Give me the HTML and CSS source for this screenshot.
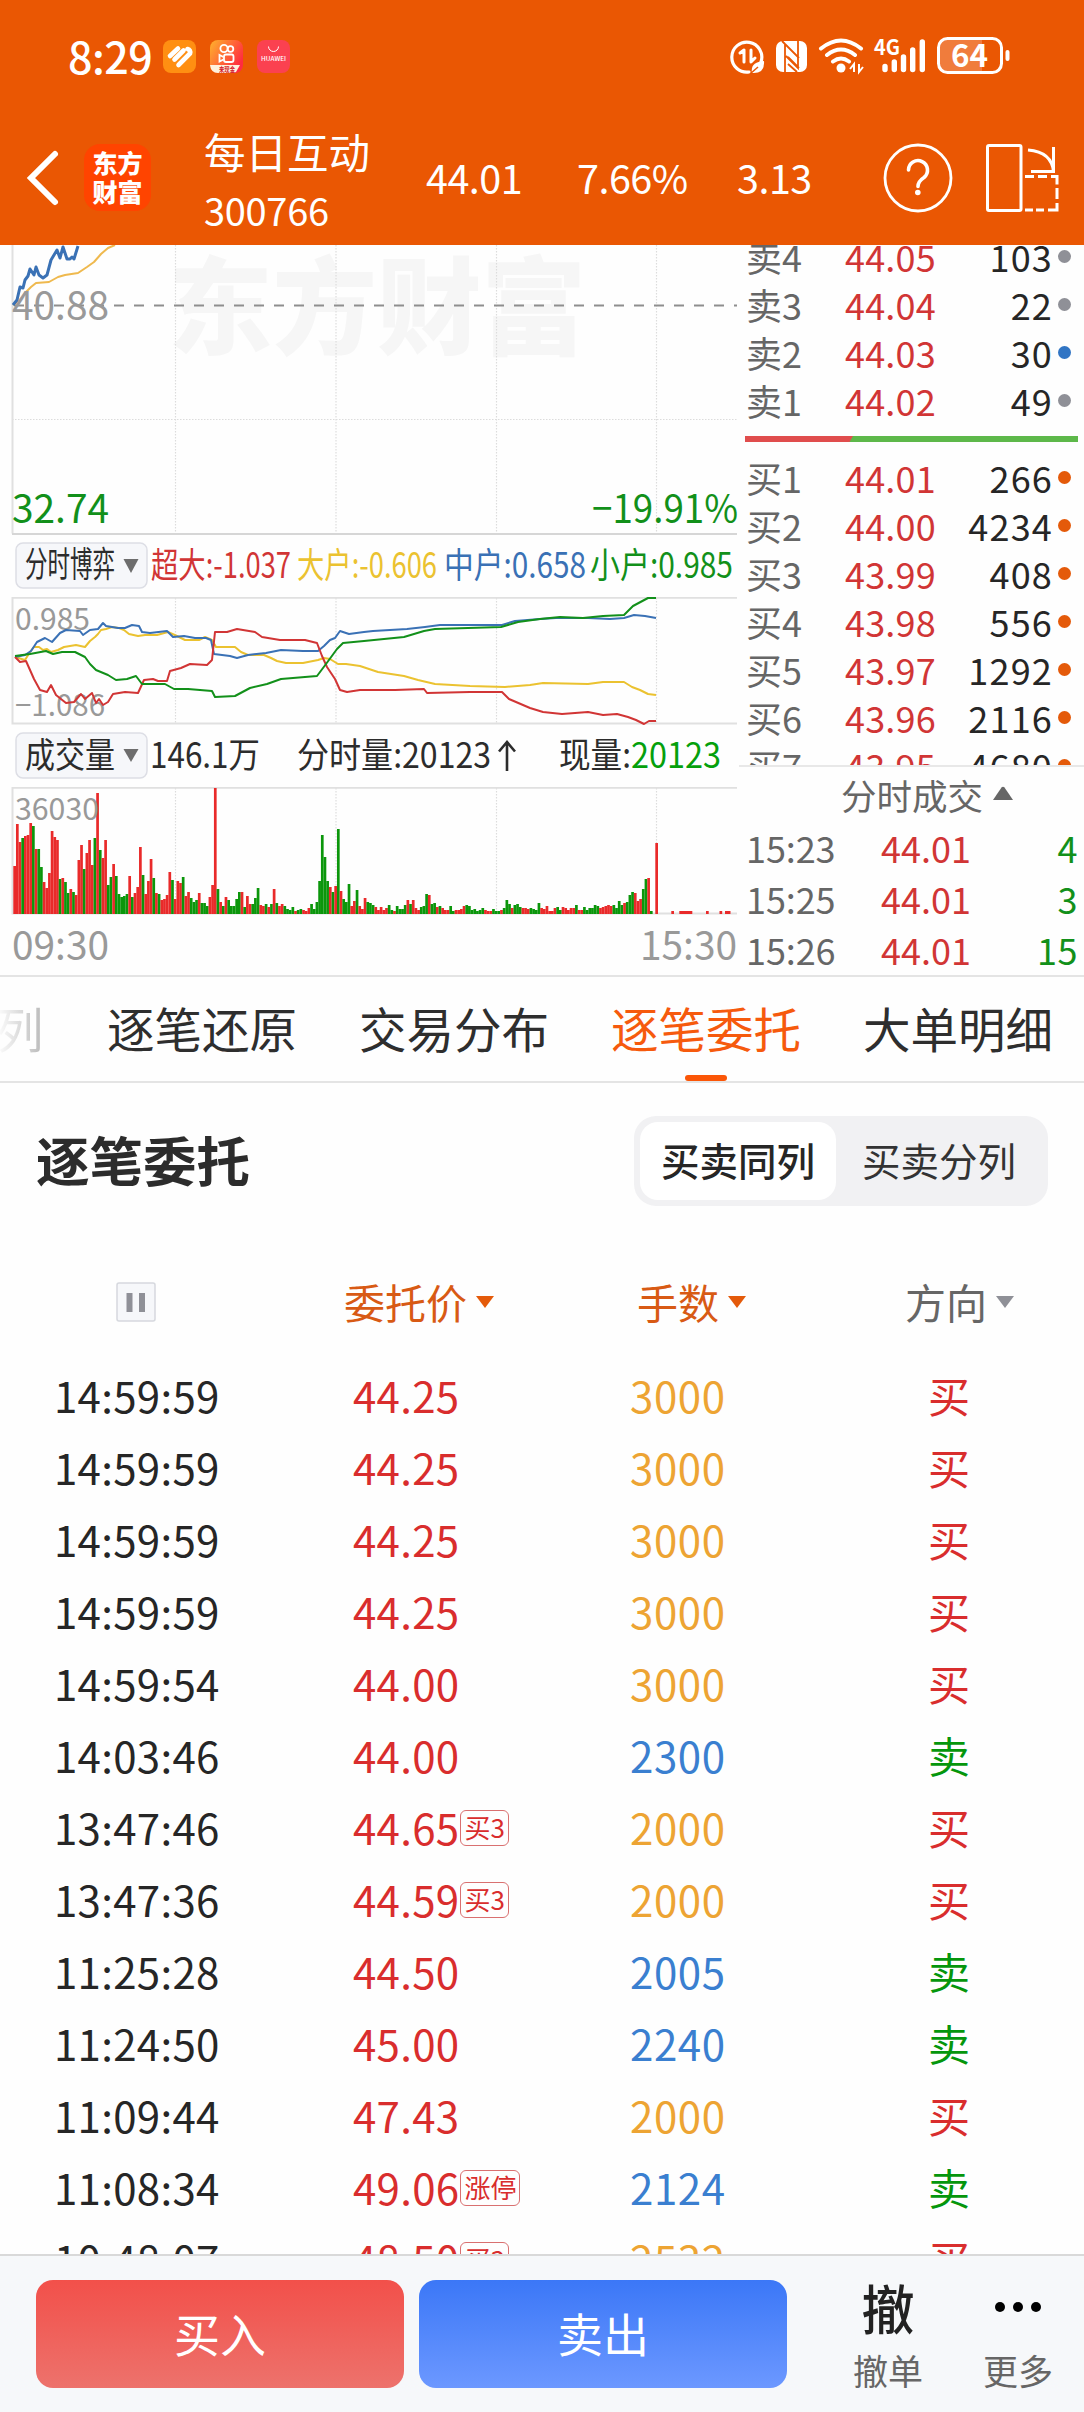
FILE: index.html
```html
<!DOCTYPE html>
<html lang="zh-CN">
<head>
<meta charset="utf-8">
<title>每日互动 300766</title>
<link rel="stylesheet" href="styles.css">
</head>
<body>
<div class="page">
  <header class="top">
    <div class="status">
      <span class="clock">8:29</span>
      <svg class="app" viewBox="0 0 33 33"><rect width="33" height="33" rx="8" fill="#ff8f12"/><path d="M7 16l8-7.500M11.500 19.500l9-9M15.500 25l11.500-11.500q1-3.500-2.500-4.500" stroke="#fff" stroke-width="4.600" stroke-linecap="round" fill="none"/></svg>
      <svg class="app" viewBox="0 0 33 33"><defs><linearGradient id="ks" x1="0" y1="0" x2="1" y2="0.600"><stop offset="0" stop-color="#ffb32c"/><stop offset="1" stop-color="#ff2b40"/></linearGradient></defs><rect width="33" height="33" rx="8" fill="url(#ks)"/><g fill="none" stroke="#fff" stroke-width="1.800"><circle cx="14" cy="8.500" r="3.600"/><circle cx="20.500" cy="9" r="2.800"/><rect x="14" y="14.500" width="9.500" height="7.500" rx="2"/><path d="M13.500 17l-4-2v6.500l4-2"/></g><path d="M0 25h30l-4 7q-2 1-4 1H8q-7 0-8-8z" fill="#fff1dc"/><text x="9" y="31.500" font-size="7" font-weight="700" fill="#d3202a" textLength="16" lengthAdjust="spacingAndGlyphs">来现金</text></svg>
      <svg class="app" viewBox="0 0 33 33"><rect width="33" height="33" rx="8" fill="#fb4150"/><path d="M11.500 6.500a5 5 0 0 0 10 0" fill="none" stroke="#fff" stroke-width="1"/><text x="4" y="21" font-size="6" font-weight="500" fill="#fff" textLength="25" lengthAdjust="spacingAndGlyphs">HUAWEI</text></svg>
      <svg class="sys" viewBox="728 34 286 44">
        <g fill="none" stroke="#fff" stroke-width="3.200" stroke-linecap="round" stroke-linejoin="round">
          <path d="M761 62a15 15 0 1 0-12 10"/>
          <path d="M740 53l4-3v12M751 50v12l4-4" stroke-width="3"/>
        </g>
        <path d="M764 61q1 13-12 12q-2-11 12-12z" fill="#fff"/><path d="M750 74l8-7" stroke="#ea5703" stroke-width="1.500"/>
        <rect x="776" y="41" width="31" height="31" rx="7" fill="#fff"/>
        <path d="M783.500 41v31M800 41v12l-16-12M783.500 48l16 17v7M799.500 72l-16-15" fill="none" stroke="#ea5703" stroke-width="0"/>
        <g fill="none" stroke="#ea5703" stroke-width="1.800"><path d="M785 72V44l14 14M798 41v27l-12-12M788 57l11 11M788 64l9 8M785 44l-3-3"/></g>
        <g fill="none" stroke="#fff" stroke-width="4" stroke-linecap="round"><path d="M821 48.500q20-16 40 0M827 55q14-11 28 0M833 61.500q8-6 16 0"/></g>
        <circle cx="841" cy="68" r="4.500" fill="#fff"/><path d="M850 69l4-5v8M863 67l-4 5v-8" stroke="#fff" stroke-width="2" fill="none"/>
        <text x="874" y="55" font-size="21" font-weight="700" fill="#fff" textLength="26" lengthAdjust="spacingAndGlyphs">4G</text>
        <g stroke="#fff" stroke-width="5.400" stroke-linecap="round"><path d="M885 66.500v3M894.300 62v7.500M903.500 57v12.500M912.700 50v19.500M922.300 42v27.500"/></g>
        <path d="M946 39h36v32h-36q-6 0-6-6V45q0-6 6-6z" fill="#f07c3c"/>
        <rect x="938.500" y="38.500" width="63" height="34" rx="9" fill="none" stroke="#fff" stroke-width="3"/>
        <path d="M1007.500 52v7" stroke="#fff" stroke-width="4" stroke-linecap="round"/>
        <text x="951" y="67" font-size="31" font-weight="700" fill="#fff" textLength="37" lengthAdjust="spacingAndGlyphs">64</text>
      </svg>
    </div>
    <div class="nav">
      <svg class="back" viewBox="0 0 34 58"><path d="M29 5L5 29L29 53" fill="none" stroke="#fff" stroke-width="6" stroke-linecap="round" stroke-linejoin="miter"/></svg>
      <div class="logo"><span>东方</span><span>财富</span></div>
      <div class="stock"><span class="name">每日互动</span><span class="code">300766</span></div>
      <span class="fig fig-price">44.01</span>
      <span class="fig fig-pct">7.66%</span>
      <span class="fig fig-chg">3.13</span>
      <svg class="help" viewBox="0 0 70 70"><circle cx="35" cy="35" r="33" fill="none" stroke="#fff" stroke-width="2.800"/><path d="M25.500 27a9.500 9.500 0 1 1 15.500 7.500q-6 4-6 9" fill="none" stroke="#fff" stroke-width="3.600" stroke-linecap="round"/><circle cx="34.800" cy="49.500" r="2.800" fill="#fff"/></svg>
      <svg class="rotate" viewBox="0 0 73 68"><g fill="none" stroke="#fff" stroke-width="3"><rect x="1.500" y="1.500" width="33.500" height="65" rx="1.500"/><path d="M42 6q24 2 25.500 22M67.500 3v24.500H45"/><path d="M39 32.500h9M52 32.500h9M65 32.500h6v8M71 44v11M71 59v7h-9M58 66h-8M47 66h-8"/></g></svg>
    </div>
  </header>

  <main class="quote">
    <div class="charts">
      <svg class="chart-price" viewBox="0 245 739 291">
        <text x="168" y="346" font-size="106" font-weight="900" fill="#f6f6f6" textLength="418" lengthAdjust="spacingAndGlyphs">东方财富</text>
        <path class="grid" d="M175.500 245v288M336 245v288M496.500 245v288M656.500 245v288M12 419.500h725"/>
        <path d="M12.500 245v288.500" class="frame"/><path d="M12 534h725" stroke="#d6d6d6" stroke-width="2"/>
        <path d="M14 305.500h723" stroke="#8e8e8e" stroke-width="2" stroke-dasharray="10 10"/>
        <polyline class="ln" stroke="#efb94e" points="13,305 18,302 25,293 31,287 36,283 49,282 58,277 65,275 78,273 87,267 94,262 101,254 108,248 115,245"/>
        <polyline class="ln thick" stroke="#3a71b5" points="13,305 17,300 20,287 23,288 25,280 28,276 30,269 34,275 36,267 39,275 43,278 47,275 51,260 57,250 60,258 63,247 67,259 70,259 72,257 74,259 78,246"/>
        <g class="t40"><text x="12" y="320" fill="#999" textLength="97" lengthAdjust="spacingAndGlyphs">40.88</text><text x="12" y="523" fill="#12901a" textLength="97" lengthAdjust="spacingAndGlyphs">32.74</text><text x="592" y="523" fill="#12901a" textLength="146" lengthAdjust="spacingAndGlyphs">−19.91%</text></g>
      </svg>
      <svg class="legend" viewBox="0 536 739 61">
        <rect class="btn" x="16" y="543" width="131" height="45" rx="7"/>
        <text x="25" y="577" textLength="90" lengthAdjust="spacingAndGlyphs" class="dark">分时博弈</text><path d="M123.500 559h15l-7.500 14z" fill="#6d6d6d"/>
        <text x="151" y="577.500" textLength="140" lengthAdjust="spacingAndGlyphs" fill="#d13535">超大:-1.037</text>
        <text x="297" y="577.500" textLength="140" lengthAdjust="spacingAndGlyphs" fill="#ebc230">大户:-0.606</text>
        <text x="444" y="577.500" textLength="142" lengthAdjust="spacingAndGlyphs" fill="#3a71b5">中户:0.658</text>
        <text x="590" y="577.500" textLength="143" lengthAdjust="spacingAndGlyphs" fill="#12901a">小户:0.985</text>
      </svg>
      <svg class="chart-game" viewBox="0 597 739 128">
        <path class="grid" d="M175.500 598v125M336 598v125M496.500 598v125M656.500 598v125"/>
        <path class="frame" d="M737 597.800H12.500V723.500H737"/>
        <g class="t30"><text x="15" y="630" textLength="75" lengthAdjust="spacingAndGlyphs">0.985</text><text x="15" y="716" textLength="90" lengthAdjust="spacingAndGlyphs">−1.086</text></g>
        <polyline class="ln" stroke="#ebc230" points="15,657 25,660 30,652 34,647 39,647 43,650 47,649 51,652 58,650 64,647 76,645 85,647 90,641 95,637 98,634 101,630 106,629 112,627 119,628 124,630 129,634 138,636 145,635 157,635 168,632 177,636 185,640 199,640 205,637 212,640 216,647 235,647 241,652 248,655 264,655 271,658 277,661 286,663 303,663 318,660 324,658 330,659 338,664 346,664 360,666 378,672 404,676 418,680 435,684 470,686 505,687 530,685 543,683 588,684 603,682 624,682 632,687 640,690 648,694 656,695"/>
        <polyline class="ln" stroke="#3a71b5" points="15,657 25,655 31,651 37,642 45,638 52,642 60,633 66,630 80,631 83,635 90,630 98,629 103,623 106,626 118,628 125,628 132,625 139,626 142,632 150,633 167,631 173,637 184,636 195,638 206,638 211,640 214,654 230,656 237,658 248,655 266,653 281,650 303,651 318,651 324,646 330,640 335,638 340,631 349,634 364,632 373,631 407,629 425,627 440,625 502,625 515,621 540,619 556,618 588,618 610,619 624,618 634,615 645,616 656,618"/>
        <polyline class="ln" stroke="#d13535" points="15,657 20,662 26,661 34,679 40,690 47,692 51,685 56,695 66,703 74,702 81,694 85,699 92,693 96,703 99,699 103,705 108,702 113,694 125,692 138,693 144,680 153,679 158,681 167,681 170,671 181,668 190,664 207,665 212,660 215,632 227,632 237,629 255,632 262,637 280,640 305,640 317,643 322,656 327,667 335,679 340,690 347,692 360,690 395,690 424,689 427,693 470,692 502,692 509,699 530,708 543,712 562,714 588,712 603,715 617,714 628,717 636,720 644,724 649,721 656,721"/>
        <polyline class="ln" stroke="#12901a" points="15,656 30,654 46,651 53,654 62,652 75,652 85,657 90,664 96,670 108,675 116,680 127,679 136,676 142,684 165,684 174,689 188,689 212,691 215,697 235,696 250,688 267,684 281,679 317,676 326,664 337,649 343,643 364,641 404,637 424,631 435,629 501,627 518,622 540,619 560,617 583,618 603,616 624,615 633,606 648,598 656,598"/>
      </svg>
      <svg class="legend" viewBox="0 725 739 62">
        <rect class="btn" x="16" y="733" width="131" height="45" rx="7"/>
        <text x="25" y="767.500" textLength="90" lengthAdjust="spacingAndGlyphs" class="dark">成交量</text><path d="M123.500 749h15l-7.500 13z" fill="#6d6d6d"/>
        <text x="150" y="768" textLength="110" lengthAdjust="spacingAndGlyphs" class="dark">146.1万</text>
        <text x="297" y="768" textLength="194" lengthAdjust="spacingAndGlyphs" class="dark">分时量:20123</text>
        <path d="M507 771V742M499 751.500l8-9.500l8 9.500" fill="none" stroke="#2c2c2c" stroke-width="2.600"/>
        <text x="559" y="768" textLength="72" lengthAdjust="spacingAndGlyphs" class="dark">现量:</text>
        <text x="631" y="768" textLength="90" lengthAdjust="spacingAndGlyphs" fill="#05a00c">20123</text>
      </svg>
      <svg class="chart-volume" viewBox="0 787 739 189">
        <path class="grid" d="M175.500 788v125M336 788v125M496.500 788v125M656.500 788v125"/>
        <path class="frame" d="M737 787.800H12.500V913.500H737"/>
        <g id="volume"></g>
        <g class="t30"><text x="15" y="820" textLength="84" lengthAdjust="spacingAndGlyphs">36030</text></g>
        <g class="t40" fill="#999"><text x="12" y="960" textLength="97" lengthAdjust="spacingAndGlyphs">09:30</text><text x="640" y="960" textLength="97" lengthAdjust="spacingAndGlyphs">15:30</text></g>
      </svg>
    </div>
    <aside class="depth">
      <div class="book">
        <div class="lv"><span>卖4</span><b>44.05</b><i>103</i><u class="gray"></u></div>
        <div class="lv"><span>卖3</span><b>44.04</b><i>22</i><u class="gray"></u></div>
        <div class="lv"><span>卖2</span><b>44.03</b><i>30</i><u class="blue"></u></div>
        <div class="lv"><span>卖1</span><b>44.02</b><i>49</i><u class="gray"></u></div>
        <div class="ratio"></div>
        <div class="lv"><span>买1</span><b>44.01</b><i>266</i><u></u></div>
        <div class="lv"><span>买2</span><b>44.00</b><i>4234</i><u></u></div>
        <div class="lv"><span>买3</span><b>43.99</b><i>408</i><u></u></div>
        <div class="lv"><span>买4</span><b>43.98</b><i>556</i><u></u></div>
        <div class="lv"><span>买5</span><b>43.97</b><i>1292</i><u></u></div>
        <div class="lv"><span>买6</span><b>43.96</b><i>2116</i><u></u></div>
        <div class="lv"><span>买7</span><b>43.95</b><i>4680</i><u></u></div>
      </div>
      <div class="deals-head">分时成交<svg viewBox="0 0 22 15"><path d="M1 14L9.500 1.500q1.500-1.500 3 0L21 14z" fill="#666"/></svg></div>
      <div class="deal"><span>15:23</span><b>44.01</b><i>4</i></div>
      <div class="deal"><span>15:25</span><b>44.01</b><i>3</i></div>
      <div class="deal"><span>15:26</span><b>44.01</b><i>15</i></div>
    </aside>
  </main>

  <nav class="tabs">
    <span class="tab faded">列</span>
    <span class="tab">逐笔还原</span>
    <span class="tab">交易分布</span>
    <span class="tab active">逐笔委托</span>
    <span class="tab last">大单明细</span>
  </nav>

  <section class="orders">
    <div class="title-row">
      <h1>逐笔委托</h1>
      <div class="segment"><span class="on">买卖同列</span><span>买卖分列</span></div>
    </div>
    <div class="row head">
      <span><svg class="pause" viewBox="0 0 40 40"><rect x="1" y="1" width="38" height="38" rx="2" fill="#f6f7fa" stroke="#d6d8de" stroke-width="1.500"/><path d="M13.500 11v19M26 11v19" stroke="#8f9097" stroke-width="6"/></svg></span>
      <span class="or h-price">委托价<svg class="tri" viewBox="0 0 18 12"><path d="M0 0h18L9 12z"/></svg></span>
      <span class="or h-qty">手数<svg class="tri" viewBox="0 0 18 12"><path d="M0 0h18L9 12z"/></svg></span>
      <span class="gr h-dir">方向<svg class="tri" viewBox="0 0 18 12"><path d="M0 0h18L9 12z"/></svg></span>
    </div>
    <div class="row"><span>14:59:59</span><span class="p">44.25</span><span class="yel">3000</span><span class="buy">买</span></div>
    <div class="row"><span>14:59:59</span><span class="p">44.25</span><span class="yel">3000</span><span class="buy">买</span></div>
    <div class="row"><span>14:59:59</span><span class="p">44.25</span><span class="yel">3000</span><span class="buy">买</span></div>
    <div class="row"><span>14:59:59</span><span class="p">44.25</span><span class="yel">3000</span><span class="buy">买</span></div>
    <div class="row"><span>14:59:54</span><span class="p">44.00</span><span class="yel">3000</span><span class="buy">买</span></div>
    <div class="row"><span>14:03:46</span><span class="p">44.00</span><span class="blu">2300</span><span class="sell">卖</span></div>
    <div class="row"><span>13:47:46</span><span class="p">44.65<em>买3</em></span><span class="yel">2000</span><span class="buy">买</span></div>
    <div class="row"><span>13:47:36</span><span class="p">44.59<em>买3</em></span><span class="yel">2000</span><span class="buy">买</span></div>
    <div class="row"><span>11:25:28</span><span class="p">44.50</span><span class="blu">2005</span><span class="sell">卖</span></div>
    <div class="row"><span>11:24:50</span><span class="p">45.00</span><span class="blu">2240</span><span class="sell">卖</span></div>
    <div class="row"><span>11:09:44</span><span class="p">47.43</span><span class="yel">2000</span><span class="buy">买</span></div>
    <div class="row"><span>11:08:34</span><span class="p">49.06<em>涨停</em></span><span class="blu">2124</span><span class="sell">卖</span></div>
    <div class="row"><span>10:48:07</span><span class="p">48.50<em>买3</em></span><span class="yel">2532</span><span class="buy">买</span></div>
  </section>

  <footer class="bar">
    <div class="cta red">买入</div>
    <div class="cta azure">卖出</div>
    <div class="act act-cancel"><span class="big">撤</span><span class="cap">撤单</span></div>
    <div class="act act-more"><span class="big"><svg viewBox="0 0 48 12"><circle cx="6" cy="6" r="5"/><circle cx="24" cy="6" r="5"/><circle cx="42" cy="6" r="5"/></svg></span><span class="cap">更多</span></div>
  </footer>
</div>
<script src="chart.js"></script>
</body>
</html>
```
FILE: chart.js
```javascript
// Per-minute volume bars: colour letter (r = up, g = down) followed by height in px.
const minutes = 'r48 r90 r72 g76 r78 r79 r91 g88 r65 g65 g47 r32 r26 r41 r83 r77 r74 g35 r36 g32 g21 r25 g22 r19 r54 r69 g45 r61 r74 r49 g76 r121 g64 r56 r74 g29 g37 r50 g38 g20 g17 g18 g20 r38 g17 r21 r27 r67 g39 r20 r33 r55 g36 r21 g20 r14 r15 r19 r42 g34 r15 r33 r31 g37 r18 r22 g16 g12 g14 r21 g11 g11 g8 r17 r29 r126 g25 r12 g8 r17 g14 g8 g8 g15 g22 r22 g7 r18 r10 g10 g16 g26 r9 r8 g10 r7 g10 r25 g11 r8 r10 g8 g5 g4 g7 r3 g4 g5 r4 r3 r6 g10 g5 g12 g33 g79 g57 g33 r27 g22 r28 g85 r23 g15 g12 g30 r8 r13 g24 r8 r5 r16 g12 g11 g9 r7 r4 r7 r4 r6 g9 g4 r3 g8 g5 g5 g9 r14 g10 r14 r6 r4 g7 g8 g20 r19 g10 g11 r7 g8 r6 r4 r4 g8 g3 r4 r4 r5 r8 g9 g8 g4 g5 g3 g4 g6 r4 r3 r3 g5 g3 g3 r4 g6 g14 g10 r6 g9 g10 g7 r6 r6 r5 g6 g5 g4 g11 r6 r5 r8 r3 r3 r6 g7 g4 r7 r6 r4 r6 r6 g9 r4 r4 g7 g4 g6 g6 g9 g8 r6 r7 r8 r9 r8 g9 g6 g13 g9 r11 g12 g19 g22 r21 r13 r15 g25 g35 r36 g3 g0 r71'.split(' ');
const colours = { r: '#e92a2a', g: '#0b960b' };
const pitch = 2.675;
const floor = 914;
let bars = '';
function bar(x, h, c, w) {
  bars += `<rect x="${x.toFixed(2)}" y="${floor - h}" width="${w}" height="${h}" fill="${colours[c]}"/>`;
}
minutes.forEach((m, i) => bar(13.3 + i * pitch, +m.slice(1), m[0], 2.7));
[[671.3, 2.7], [679.3, 13], [706, 2.7], [719.5, 2.7], [725, 5.500]].forEach(([x, w]) => bar(x, 3, 'r', w));
document.getElementById('volume').innerHTML = bars;
```
FILE: styles.css
```css
* { box-sizing: border-box; }
body { margin: 0; background: #fff; font-family: "Noto Sans CJK SC", "Noto Sans", sans-serif; color: #2a2a2a; }
svg { display: block; flex: none; }
span { white-space: nowrap; }
.page { width: 1084px; height: 2412px; display: flex; flex-direction: column; overflow: hidden; background: #fefefe; }

.top { height: 245px; flex: none; background: #ea5703; color: #fff; }
.status { height: 110px; display: flex; align-items: center; padding-left: 68px; padding-top: 2px; }
.clock { font-size: 43px; font-weight: 500; line-height: 60px; width: 95px; letter-spacing: -0.5px; margin-top: -2px; }
.app { width: 33px; height: 33px; margin-right: 14px; }
.sys { width: 286px; height: 44px; margin-left: 424px; }
.nav { height: 135px; display: flex; align-items: center; }
.back { width: 34px; height: 58px; margin-left: 26px; }
.logo { width: 67px; height: 67px; margin-left: 24px; border-radius: 16px; background: #ff4400; font-size: 25px; font-weight: 900; line-height: 29px; display: flex; flex-direction: column; align-items: center; justify-content: center; padding-bottom: 2px; }
.stock { margin-left: 53px; width: 222px; display: flex; flex-direction: column; }
.name { font-size: 41.5px; line-height: 60px; margin-top: 2px; }
.code { font-size: 38px; line-height: 54px; letter-spacing: -0.3px; margin-top: 2px; }
.fig { font-size: 39.5px; line-height: 60px; margin-top: -2px; letter-spacing: -0.5px; }
.fig-price { width: 151px; }
.fig-pct { width: 160px; }
.fig-chg { width: 146px; }
.help { width: 70px; height: 70px; }
.rotate { width: 73px; height: 68px; margin-left: 33px; }

.quote { height: 732px; flex: none; display: flex; border-bottom: 2px solid #e4e4e4; }
.charts { width: 739px; }
.chart-price { width: 739px; height: 291px; }
.legend { width: 739px; height: 61px; }
.chart-game { width: 739px; height: 128px; }
.chart-game + .legend { height: 62px; }
.chart-volume { width: 739px; height: 189px; }
.legend text { font-size: 35px; }
.dark { fill: #2c2c2c; }
.btn { fill: #f6f7fa; stroke: #dddee5; stroke-width: 1.5; }
.grid { fill: none; stroke: #dcdcdc; stroke-width: 1.2; stroke-dasharray: 1.5 1.5; }
.frame { fill: none; stroke: #e0e0e0; stroke-width: 2; }
.ln { fill: none; stroke-width: 2; stroke-linejoin: round; }
.thick { stroke-width: 3; }
.t40 { font-size: 39.5px; }
.t30 { font-size: 30.5px; fill: #999; }

.depth { width: 345px; font-size: 36px; }
.depth b, .depth i { font-weight: 400; font-style: normal; }
.book { height: 522px; overflow: hidden; border-bottom: 2px solid #e8e8e8; padding: 0 13px 0 7px; display: flex; flex-direction: column; }
.lv { flex: none; height: 48px; line-height: 48px; display: grid; grid-template-columns: 99px 105px 103px 18px; }
.lv:first-child { margin-top: -13.5px; }
.lv span { color: #666; }
.lv b { color: #d13535; letter-spacing: 0.2px; }
.lv i { color: #262626; text-align: right; letter-spacing: 1.2px; }
.lv u { width: 13px; height: 13px; border-radius: 50%; background: #e45a0a; margin: 18px 0 0 5px; }
.lv .gray { background: #8f9097; }
.lv .blue { background: #3175c4; }
.ratio { flex: none; height: 6px; margin: 12.5px -7px 11.3px -1px; width: 333px; background: linear-gradient(120deg, #e04d4d 93px, #5db84a 94px); }
.deals-head { height: 55px; line-height: 55px; display: flex; align-items: center; padding-left: 102px; color: #666; font-size: 35.5px; }
.deals-head svg { width: 22px; height: 15px; margin: -3px 0 0 9px; }
.deal { height: 51px; line-height: 51px; display: grid; grid-template-columns: 135px 100px 97px; padding-left: 7px; }
.deal span { color: #666; letter-spacing: -0.1px; }
.deal b { color: #d13535; }
.deal i { color: #12901a; text-align: right; letter-spacing: 0.5px; }

.tabs { height: 106px; flex: none; display: flex; border-bottom: 2px solid #e4e4e4; font-size: 47.5px; line-height: 101px; color: #2e2e2e; }
.tab { width: 252px; flex: none; position: relative; }
.faded { width: 102px; margin-left: -4px; margin-right: 0; padding-right: 55px; color: transparent; background: linear-gradient(90deg, #fff, #bbb 46px); -webkit-background-clip: text; background-clip: text; }
.tab + .tab { padding-left: 9px; }
.active { color: #f65a0d; }
.tab.last { width: 230px; }
.active::after { content: ""; position: absolute; left: 83px; bottom: 0; width: 42px; height: 6px; border-radius: 3px; background: #fb5607; }

.orders { flex: 1; min-height: 0; overflow: hidden; }
.title-row { height: 157px; display: flex; align-items: center; justify-content: space-between; padding: 0 36px 2px; }
h1 { margin: -3px 0 0; font-size: 53.5px; line-height: 80px; font-weight: 700; color: #2c2c2c; }
.segment { width: 414px; height: 90px; padding: 6px; border-radius: 22px; background: #f1f1f3; display: flex; font-size: 38.5px; line-height: 74px; text-align: center; color: #333; }
.segment span { width: 198px; height: 78px; border-radius: 18px; }
.segment span + span { width: 208px; }
.on { background: #fff; font-weight: 500; color: #262626; }
.row { height: 72px; line-height: 72px; display: grid; grid-template-columns: 299px 277px 298px 1fr; padding-left: 54px; font-size: 42px; letter-spacing: 0.3px; color: #262626; }
.head { height: 119px; line-height: 42px; font-size: 41px; padding-top: 40px; letter-spacing: 0; }
.head > span { display: flex; align-items: center; height: 42px; }
.pause { width: 40px; height: 40px; margin: 1px 0 0 62px; }
.or { color: #d85a14; fill: #e45a0a; }
.gr { color: #666; fill: #8f9097; }
.h-price { margin-left: -9px; }
.h-qty { margin-left: 7px; }
.h-dir { margin-left: -23px; }
.tri { width: 18px; height: 12px; margin-left: 9px; margin-top: 2px; }
.p, .buy { color: #d92d2d; }
.p { display: flex; align-items: center; }
.p em { font-style: normal; font-size: 26px; line-height: 32px; height: 36px; border: 1.5px solid #d97070; border-radius: 6px; padding: 0 3px; margin: 2px 0 0 1px; letter-spacing: 0; }
.yel { color: #eda433; }
.yel, .blu { letter-spacing: 0.6px; }
.blu { color: #3a7fd0; }
.sell { color: #05960c; }

.bar { height: 158px; flex: none; border-top: 2px solid #d9d9d9; background: #f6f8fa; display: flex; align-items: flex-start; padding: 24px 0 0 36px; }
.cta { width: 368px; height: 108px; border-radius: 17px; color: #fff; font-size: 46px; line-height: 105px; text-align: center; margin-right: 15px; }
.red { background: linear-gradient(#f2504a, #ed726c); }
.azure { background: linear-gradient(#3b77f7, #6c98ff); }
.act { display: flex; flex-direction: column; align-items: center; width: 90px; }
.act-cancel { margin-left: 41px; }
.act-more { margin-left: 40px; }
.big { height: 54px; line-height: 50px; font-size: 53px; font-weight: 500; display: flex; align-items: center; color: #222; }
.big svg { width: 48px; height: 12px; }
.cap { font-size: 35px; line-height: 40px; margin-top: 16px; color: #666; }
```
